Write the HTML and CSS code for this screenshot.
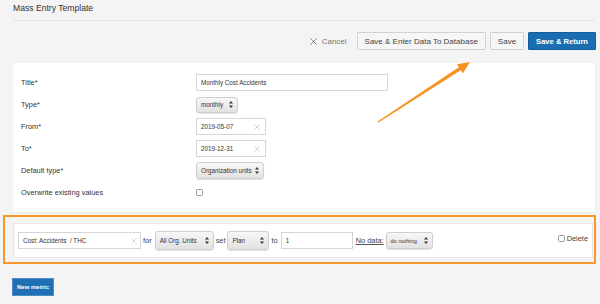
FILE: index.html
```html
<!DOCTYPE html>
<html>
<head>
<meta charset="utf-8">
<link rel="stylesheet" href="styles.css">
</head>
<body>
<div class="page">
  <div class="header">Mass Entry Template</div>
  <div class="toolbar">
    <span class="cancel"><svg width="7" height="7" viewBox="0 0 7 7"><path d="M0.5 0.5L6.5 6.5M6.5 0.5L0.5 6.5" stroke="#777" stroke-width="0.9"/></svg>Cancel</span>
    <span class="btn btn-wide">Save &amp; Enter Data To Database</span>
    <span class="btn">Save</span>
    <span class="btn btn-primary">Save &amp; Return</span>
  </div>
  <div class="panel">
    <div class="form">
      <div class="label">Title*</div>
      <div class="field"><div class="input input-title">Monthly Cost Accidents</div></div>
      <div class="label">Type*</div>
      <div class="field"><div class="select sel-type"><span>monthly</span><svg class="arr" width="4" height="7" viewBox="0 0 4 7"><path d="M2 0L4 2.6H0Z M2 7L4 4.4H0Z" fill="#333"/></svg></div></div>
      <div class="label">From*</div>
      <div class="field"><div class="input input-date"><span>2019-05-07</span><svg width="6" height="6" viewBox="0 0 6 6"><path d="M0.5 0.5L5.5 5.5M5.5 0.5L0.5 5.5" stroke="#c8c8c8" stroke-width="0.8"/></svg></div></div>
      <div class="label">To*</div>
      <div class="field"><div class="input input-date"><span>2019-12-31</span><svg width="6" height="6" viewBox="0 0 6 6"><path d="M0.5 0.5L5.5 5.5M5.5 0.5L0.5 5.5" stroke="#c8c8c8" stroke-width="0.8"/></svg></div></div>
      <div class="label">Default type*</div>
      <div class="field"><div class="select sel-default"><span>Organization units</span><svg class="arr" width="4" height="7" viewBox="0 0 4 7"><path d="M2 0L4 2.6H0Z M2 7L4 4.4H0Z" fill="#333"/></svg></div></div>
      <div class="label">Overwrite existing values</div>
      <div class="field"><span class="checkbox"></span></div>
    </div>
  </div>
  <div class="highlight">
    <div class="metric">
      <div class="input input-metric"><span>Cost: Accidents &nbsp;/ THC</span><svg width="6" height="6" viewBox="0 0 6 6"><path d="M0.5 0.5L5.5 5.5M5.5 0.5L0.5 5.5" stroke="#d0d0d0" stroke-width="0.8"/></svg></div>
      <span class="word">for</span>
      <div class="select sel-org tall"><span>All Org. Units</span><svg class="arr" width="4" height="7" viewBox="0 0 4 7"><path d="M2 0L4 2.6H0Z M2 7L4 4.4H0Z" fill="#333"/></svg></div>
      <span class="word">set</span>
      <div class="select sel-plan tall"><span>Plan</span><svg class="arr" width="4" height="7" viewBox="0 0 4 7"><path d="M2 0L4 2.6H0Z M2 7L4 4.4H0Z" fill="#333"/></svg></div>
      <span class="word">to</span>
      <div class="input input-value">1</div>
      <span class="word nodata">No data:</span>
      <div class="select sel-nodata"><span>do nothing</span><svg class="arr" width="4" height="7" viewBox="0 0 4 7"><path d="M2 0L4 2.6H0Z M2 7L4 4.4H0Z" fill="#333"/></svg></div>
      <span class="delete"><span class="checkbox"></span>Delete</span>
    </div>
  </div>
  <div class="footer">
    <span class="btn-new">New metric</span>
  </div>
  <svg class="arrow" width="600" height="304" viewBox="0 0 600 304">
    <polygon points="378.4,122.6 377.6,121.4 459.5,66.8 461.5,69.8" fill="#f7931e"/>
    <polygon points="470,62 462.9,73.2 457,64.2" fill="#f7931e"/>
  </svg>
</div>
</body>
</html>
```

FILE: styles.css
```css
* { box-sizing: border-box; }
html, body { margin: 0; padding: 0; }
body {
  background: #f4f4f4;
  font-family: "Liberation Sans", Arial, Helvetica, sans-serif;
  color: #333;
  width: 600px;
  height: 304px;
  overflow: hidden;
}
.page { position: relative; width: 600px; height: 304px; }

.header {
  margin: 0 5px 0 13px;
  height: 21px;
  line-height: 16px;
  font-size: 8.6px;
  color: #333;
  border-bottom: 1px solid #e4e4e4;
}

.toolbar {
  margin: 11px 4px 0 0;
  display: flex;
  justify-content: flex-end;
  align-items: center;
  gap: 4px;
  height: 18px;
}
.cancel {
  display: flex;
  align-items: center;
  gap: 5px;
  color: #777;
  font-size: 8px;
  margin-right: 6px;
}
.btn {
  height: 18px;
  display: flex;
  align-items: center;
  padding: 0 7px;
  font-size: 8px;
  color: #444;
  background: #f6f6f6;
  border: 1px solid #d2d2d2;
  border-radius: 1px;
}
.btn-primary {
  background: #1b6db1;
  border-color: #155d98;
  color: #fff;
  font-weight: bold;
  font-size: 7.6px;
  padding: 0 7px;
}

.panel {
  margin: 13px 5px 0 13px;
  background: #fff;
  box-shadow: 1px 0 0 #ececec, 0 1px 0 #ececec;
  padding: 11px 0 11px 8px;
}
.form {
  display: grid;
  grid-template-columns: 175px 1fr;
  grid-auto-rows: 17px;
  row-gap: 5px;
}
.label {
  font-size: 7.4px;
  color: #333;
  display: flex;
  align-items: center;
  white-space: nowrap;
}
.field { display: flex; align-items: center; }

.input {
  height: 17px;
  border: 1px solid #d6d6d6;
  background: #fff;
  font-size: 6.3px;
  color: #333;
  display: flex;
  align-items: center;
  padding: 0 4px;
}
.input-title { width: 192px; }
.input-date { width: 70px; justify-content: space-between; padding-right: 5px; }

.select {
  height: 17px;
  display: flex;
  align-items: center;
  justify-content: space-between;
  padding: 0 4px 0 4px;
  font-size: 6.3px;
  color: #333;
  background: linear-gradient(#f7f7f7, #e2e2e2);
  border: 1px solid #cfcfcf;
  border-radius: 3px;
  box-shadow: 0 1px 1px rgba(0,0,0,0.12);
}
.select .arr { flex: none; }
.sel-type { width: 42px; height: 16px; }
.sel-default { width: 68px; }

.checkbox {
  display: inline-block;
  width: 7px;
  height: 7px;
  border: 1px solid #9a9a9a;
  border-radius: 1.5px;
  background: #fff;
}

.highlight {
  margin: 3px 4px 0 3px;
  border: 2px solid #f7962b;
  padding: 6px 1px 4px 8px;
}
.metric {
  background: #fff;
  border: 1px solid #e6e6e6;
  height: 35px;
  display: flex;
  align-items: center;
  padding: 0 4px;
  gap: 2px;
}
.input-metric { width: 123px; justify-content: space-between; padding-right: 3px; }
.input-value { width: 72px; margin-left: 1px; }
.word { font-size: 7.4px; color: #444; padding: 0 0 0 0; }
.tall { height: 19px; }
.sel-org { width: 59px; margin-left: 1px; }
.sel-plan { width: 42px; }
.sel-nodata { width: 47px; font-size: 5.6px; }
.nodata { text-decoration: underline; text-decoration-color: #555; margin-left: 1px; }
.delete {
  margin-left: auto;
  align-self: flex-start;
  margin-top: 10px;
  display: flex;
  align-items: center;
  gap: 2px;
  font-size: 7.4px;
  color: #444;
}
.delete .checkbox { width: 7px; height: 7px; }

.footer { margin: 11px 0 0 12px; }
.btn-new {
  display: inline-flex;
  align-items: center;
  height: 18px;
  padding: 0 4px;
  background: #1f6fb4;
  border: 1px solid #4a8cc6;
  color: #fff;
  font-weight: bold;
  font-size: 6px;
}

.arrow { position: absolute; left: 0; top: 0; pointer-events: none; }
```
